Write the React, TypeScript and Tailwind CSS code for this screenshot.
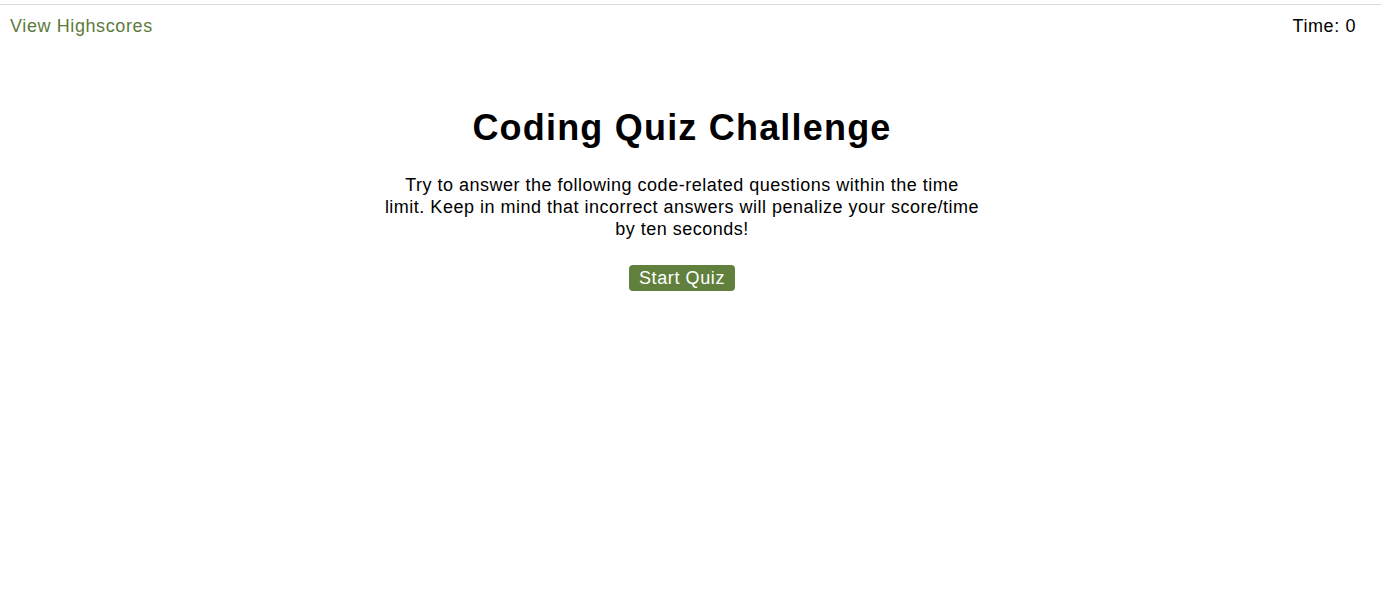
export default function App() {
  return (
    <div className="min-h-screen bg-white text-black font-['Liberation_Sans',Arial,sans-serif]">
      <div className="h-1" />
      <header className="flex items-center justify-between border-t border-[#dddddd] pl-[10px] pr-[25px] pt-[11px] text-[18px] leading-[21px] tracking-[0.6px]">
        <a className="text-[#5c7a3b] cursor-pointer">View Highscores</a>
        <div>Time: 0</div>
      </header>

      <div className="pr-[17px]">
        <main className="mx-auto mt-[70px] flex w-[610px] flex-col items-center text-center">
          <h1 className="text-[36px] font-bold leading-[41px] tracking-[1.2px]">Coding Quiz Challenge</h1>
          <p className="mt-[26px] text-[18px] leading-[22px] tracking-[0.5px]">
            Try to answer the following code-related questions within the time
            <br />
            limit. Keep in mind that incorrect answers will penalize your score/time
            <br />
            by ten seconds!
          </p>
          <button className="mt-[25px] rounded-[4px] bg-[#617f3d] px-[10px] py-[2px] text-[18px] leading-[22px] tracking-[0.6px] text-white">
            Start Quiz
          </button>
        </main>
      </div>
    </div>
  )
}
